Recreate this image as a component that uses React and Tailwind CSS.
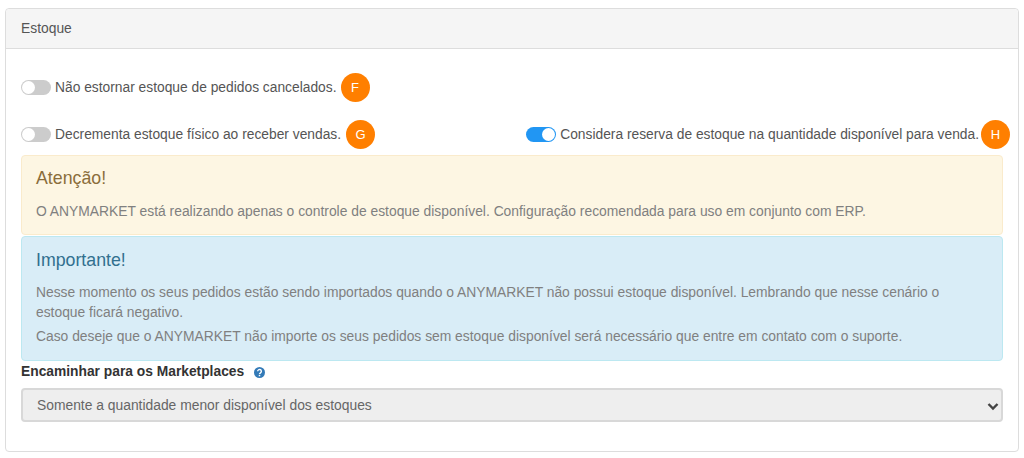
function Toggle({ on }) {
  return (
    <span
      className={`flex h-[15px] w-[30px] shrink-0 rounded-full p-px ${
        on ? 'justify-end bg-[#2196f3]' : 'justify-start bg-[#cccccc]'
      }`}
    >
      <span className="h-[13px] w-[13px] rounded-full bg-white" />
    </span>
  )
}

function Badge({ letter }) {
  return (
    <span className="flex h-[29px] w-[29px] shrink-0 items-center justify-center rounded-full bg-[#ff7f00] text-[13px] text-white">
      {letter}
    </span>
  )
}

function Option({ label, letter, on, gap }) {
  return (
    <div className="flex items-center">
      <Toggle on={on} />
      <span className="ml-1 pt-[2px] text-[13.8px] text-[#555555]">{label}</span>
      <span className={gap}>
        <Badge letter={letter} />
      </span>
    </div>
  )
}

export default function App() {
  return (
    <div className="h-[458px] bg-white px-[5px] pt-2 font-['Liberation_Sans',Arial,sans-serif]">
      <div className="h-[444px] rounded border border-[#dddddd]">
        <div className="flex h-10 items-center rounded-t border-b border-[#dddddd] bg-[#f5f5f5] px-[15px] text-[13.85px] text-[#555555]">
          Estoque
        </div>

        <div className="px-[15px]">
          <div className="pt-[24px]">
            <Option label="Não estornar estoque de pedidos cancelados." letter="F" gap="ml-[4px]" />
          </div>

          <div className="mt-[18px] flex items-center justify-between">
            <Option label="Decrementa estoque físico ao receber vendas." letter="G" gap="ml-[5px]" />
            <div className="mr-[-7px]">
              <Option label="Considera reserva de estoque na quantidade disponível para venda." letter="H" on gap="ml-[2px]" />
            </div>
          </div>

          <div className="mt-[6px] h-[80px] rounded border border-[#faebcc] bg-[#fdf6e3] px-[14px] pt-[12px] text-[#8a6d3b]">
            <h4 className="text-[17.75px] leading-5">Atenção!</h4>
            <p className="mt-[13px] text-[13.85px] leading-5 text-[#808080]">
              O ANYMARKET está realizando apenas o controle de estoque disponível. Configuração recomendada para uso em conjunto com ERP.
            </p>
          </div>

          <div className="mt-px h-[125px] rounded border border-[#bce8f1] bg-[#d9edf7] px-[14px] pt-[13px] text-[#31708f]">
            <h4 className="text-[17.75px] leading-5">Importante!</h4>
            <p className="mt-[12px] text-[13.85px] leading-5 text-[#808080]">
              Nesse momento os seus pedidos estão sendo importados quando o ANYMARKET não possui estoque disponível. Lembrando que nesse cenário o estoque ficará negativo.
            </p>
            <p className="mt-[4px] text-[13.85px] leading-5 text-[#808080]">
              Caso deseje que o ANYMARKET não importe os seus pedidos sem estoque disponível será necessário que entre em contato com o suporte.
            </p>
          </div>

          <label className="mt-px flex h-5 items-center text-[13.8px] font-bold text-[#333333]">
            Encaminhar para os Marketplaces
            <svg viewBox="0 0 24 24" className="ml-[10px] h-[11px] w-[11px]">
              <circle cx="12" cy="12" r="12" fill="#337ab7" />
              <path d="M8 9.5a4 4 0 1 1 6.2 3.3c-1.4.9-2.2 1.5-2.2 2.7" fill="none" stroke="white" strokeWidth="3" />
              <rect x="10.4" y="17" width="3.2" height="3.2" fill="white" />
            </svg>
          </label>

          <div className="mt-[6px] flex h-[34px] items-center justify-between rounded border-2 border-[#d8d8d8] bg-[#eeeeee] pl-[14px] pr-[2px] pt-px text-[13.85px] text-[#666666]">
            Somente a quantidade menor disponível dos estoques
            <svg viewBox="0 0 12 12" className="h-3 w-3" fill="none" stroke="#444444" strokeWidth="2.4">
              <path d="M1.5 4l4.5 4.5L10.500 4" />
            </svg>
          </div>
        </div>
      </div>
    </div>
  )
}
